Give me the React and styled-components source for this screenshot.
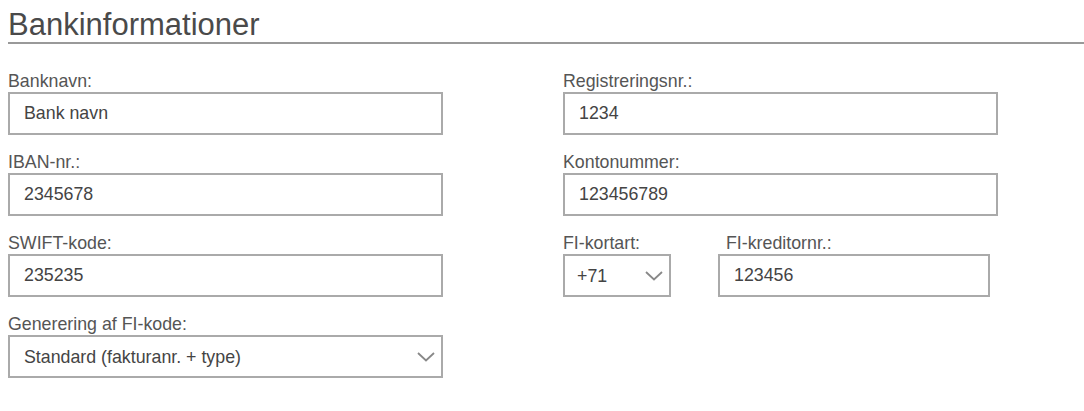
import React from "react";
import styled, { createGlobalStyle } from "styled-components";

const GlobalStyle = createGlobalStyle`
  body {
    margin: 8px 0 8px 8px;
    background: #fff;
    font-family: "Liberation Sans", Arial, sans-serif;
    color: #555;
  }
`;

const Heading = styled.h2`
  margin: 0;
  padding-top: 1px;
  padding-bottom: 1px;
  font-size: 31px;
  line-height: 32px;
  font-weight: normal;
  color: #4a4a4a;
  border-bottom: 2px solid #999;
`;

const Form = styled.div`
  display: grid;
  grid-template-columns: 435px 435px;
  column-gap: 120px;
  row-gap: 17px;
  margin-top: 27px;
`;

const Field = styled.div`
  display: flex;
  flex-direction: column;
  width: ${p => p.width || "100%"};
`;

const SplitRow = styled.div`
  display: flex;
  gap: 47px;
`;

const Label = styled.label`
  font-size: 17.8px;
  line-height: 20px;
  color: #555;
  margin-bottom: 1px;
  padding-left: ${p => p.indent || 0};
`;

const Input = styled.input`
  box-sizing: border-box;
  width: 100%;
  height: 43px;
  border: 2px solid #aaa;
  border-radius: 0;
  padding: 0 14px;
  font-family: inherit;
  font-size: 17.8px;
  color: #444;
  caret-color: #222;
  outline: none;
  background: #fff;
`;

const SelectWrap = styled.div`
  position: relative;
  width: 100%;
`;

const Select = styled.select`
  appearance: none;
  box-sizing: border-box;
  width: 100%;
  height: 43px;
  border: 2px solid #aaa;
  border-radius: 0;
  padding: 0 ${p => (p.compact ? "12px" : "14px")};
  font-family: inherit;
  font-size: 17.8px;
  color: #444;
  background: #fff;
  outline: none;
`;

const Chevron = styled.svg`
  position: absolute;
  right: 8px;
  top: 50%;
  transform: translateY(-50%);
  pointer-events: none;
`;

function ChevronIcon() {
  return (
    <Chevron width="18" height="10" viewBox="0 0 18 10">
      <path d="M1 1 L9 8.5 L17 1" fill="none" stroke="#888" strokeWidth="1.8" />
    </Chevron>
  );
}

function TextField({ label, value, width, indent, focused }) {
  const placeCaret = e => {
    const len = e.target.value.length;
    e.target.setSelectionRange(len, len);
  };
  return (
    <Field width={width}>
      <Label indent={indent}>{label}</Label>
      <Input
        defaultValue={value}
        readOnly={!focused}
        autoFocus={focused}
        onFocus={focused ? placeCaret : undefined}
      />
    </Field>
  );
}

function SelectField({ label, options, width, compact }) {
  return (
    <Field width={width}>
      <Label>{label}</Label>
      <SelectWrap>
        <Select compact={compact ? 1 : 0} defaultValue={options[0]}>
          {options.map(o => (
            <option key={o}>{o}</option>
          ))}
        </Select>
        <ChevronIcon />
      </SelectWrap>
    </Field>
  );
}

export default function App() {
  return (
    <>
      <GlobalStyle />
      <Heading>Bankinformationer</Heading>
      <Form>
        <TextField label="Banknavn:" value="Bank navn" />
        <TextField label="Registreringsnr.:" value="1234" />
        <TextField label="IBAN-nr.:" value="2345678" />
        <TextField label="Kontonummer:" value="123456789" />
        <TextField label="SWIFT-kode:" value="235235" />
        <SplitRow>
          <SelectField
            label="FI-kortart:"
            options={["+71", "+73", "+75"]}
            width="108px"
            compact
          />
          <TextField
            label="FI-kreditornr.:"
            value="123456"
            width="272px"
            indent="8px"
            focused
          />
        </SplitRow>
        <SelectField
          label="Generering af FI-kode:"
          options={["Standard (fakturanr. + type)"]}
        />
      </Form>
    </>
  );
}
